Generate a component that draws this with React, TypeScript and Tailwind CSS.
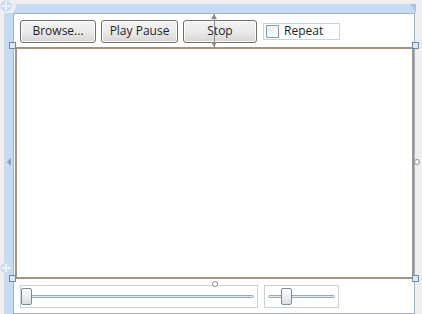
const btn =
  "h-[23px] rounded-[3px] border border-[#707070] bg-gradient-to-b from-[#f3f3f3] via-[#ebebeb] to-[#d6d6d6] text-[12px] text-[#1e1e1e] shadow-[inset_0_0_0_1px_#fcfcfc] flex items-center justify-center";

function Slider({ width, thumb }: { width: number; thumb: number }) {
  return (
    <div
      className="h-[23px] border border-[#c8d2dc] relative flex items-center px-[3px]"
      style={{ width }}
    >
      <div className="h-[3px] w-full rounded-full border border-[#9aa7b5] bg-[#e6eaee]" />
      {/* thumb */}
      <div
        className="absolute top-[2px] w-[11px] h-[17px] rounded-[2px] border border-[#7d8a99] bg-gradient-to-b from-white to-[#d8dde3]"
        style={{ left: thumb }}
      />
    </div>
  );
}

export default function App() {
  return (
    <div className="w-[422px] h-[314px] bg-[#efefef] relative overflow-hidden flex font-['Open_Sans',sans-serif]">
      {/* left ruler */}
      <div className="w-[4px]" />
      <div className="w-[9px] mt-[13px] bg-[#c7dbf2] relative">
        <div className="absolute left-[3px] top-[145px] w-0 h-0 border-y-[4px] border-y-transparent border-r-[4px] border-r-[#8aa0b8]" />
      </div>

      <div className="w-[403px] flex flex-col">
        {/* top ruler */}
        <div className="h-[4px]" />
        <div className="h-[9px] bg-[#c7dbf2] relative">
          <div className="absolute left-0 top-0 w-0 h-0 border-t-[9px] border-t-[#efefef] border-r-[4px] border-r-transparent" />
          <div className="absolute right-0 top-0 w-0 h-0 border-b-[9px] border-b-[#efefef] border-l-[4px] border-l-transparent opacity-0" />
          <div className="absolute right-[0px] top-0 w-0 h-0 border-t-[9px] border-t-[#a8c4e6] border-l-[6px] border-l-transparent" />
        </div>

        {/* window */}
        <div className="flex-1 bg-white border border-[#9fb3cc] mr-[1px] flex flex-col relative">
          {/* toolbar */}
          <div className="h-[33px] flex items-center gap-[5px] pl-[6px] pt-[1px]">
            <div className={btn + " w-[76px]"}>Browse...</div>
            <div className={btn + " w-[77px]"}>Play Pause</div>
            <div className={btn + " w-[74px] relative"}>
              Stop
            </div>
            <div className="ml-[1px] w-[77px] h-[17px] border border-[#c5d3e0] flex items-center gap-[5px] pl-[2px] text-[12px] text-[#1e1e1e]">
              <div className="w-[13px] h-[13px] border border-[#8e9aa6] bg-gradient-to-br from-[#e8ebee] to-white" />
              <span>Repeat</span>
            </div>
          </div>

          {/* media element */}
          <div className="h-[232px] ml-[1px] mr-[0px] border-2 border-[#a39482] bg-white" />

          {/* sliders */}
          <div className="flex-1 flex items-start gap-[6px] pl-[6px] pt-[6px]">
            <Slider width={238} thumb={0} />
            <Slider width={75} thumb={16} />
          </div>

          {/* stop adorner */}
          <div className="absolute left-[200px] top-0 h-[33px] w-[1px] bg-[#8c8c8c]" />
          <div className="absolute left-[197px] top-0 w-0 h-0 border-x-[3.5px] border-x-transparent border-b-[5px] border-b-[#8c8c8c]" />
          <div className="absolute left-[197px] top-[28px] w-0 h-0 border-x-[3.5px] border-x-transparent border-t-[5px] border-t-[#8c8c8c]" />
          {/* handles */}
          <div className="absolute -left-[5px] top-[28px] w-[7px] h-[7px] border border-[#6d89ab] bg-[#dfe8f3]" />
          <div className="absolute -right-[5px] top-[28px] w-[7px] h-[7px] border border-[#6d89ab] bg-[#dfe8f3]" />
          <div className="absolute -left-[5px] top-[261px] w-[7px] h-[7px] border border-[#6d89ab] bg-[#dfe8f3]" />
          <div className="absolute -right-[5px] top-[261px] w-[7px] h-[7px] border border-[#6d89ab] bg-[#dfe8f3]" />
          <div className="absolute -right-[6px] top-[145px] w-[6px] h-[6px] rounded-full border border-[#8c8c8c] bg-white" />
          <div className="absolute left-[198px] top-[267px] w-[6px] h-[6px] rounded-full border border-[#8c8c8c] bg-white" />
        </div>
      </div>

      {/* move glyphs */}
      <svg className="absolute left-0 top-0" width="12" height="12" viewBox="0 0 12 12">
        <circle cx="6" cy="6" r="5.5" fill="#c7dbf2" />
        <path d="M6 1.5L4.5 3.5H7.5ZM6 10.5L4.5 8.5H7.5ZM1.5 6L3.5 4.5V7.5ZM10.5 6L8.5 4.5V7.5Z" fill="#fff" />
        <path d="M6 3V9M3 6H9" stroke="#fff" strokeWidth="1" />
      </svg>
      <svg className="absolute left-0 top-[262px]" width="12" height="12" viewBox="0 0 12 12">
        <circle cx="6" cy="6" r="5.5" fill="#c7dbf2" />
        <path d="M6 1.5L4.5 3.5H7.5ZM6 10.5L4.5 8.5H7.5ZM1.5 6L3.5 4.5V7.5ZM10.5 6L8.5 4.5V7.5Z" fill="#fff" />
        <path d="M6 3V9M3 6H9" stroke="#fff" strokeWidth="1" />
      </svg>
    </div>
  );
}
